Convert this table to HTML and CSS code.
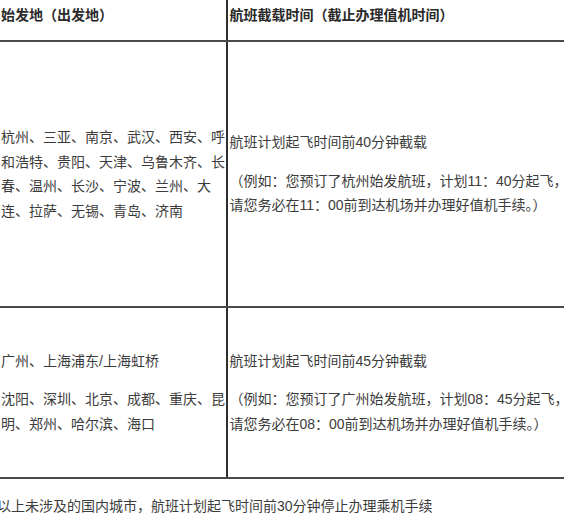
FILE: index.html
```html
<!DOCTYPE html>
<html lang="zh-CN">
<head>
<meta charset="utf-8">
<title>航班截载时间</title>
<link rel="stylesheet" href="styles.css">
</head>
<body>
<div class="page">
  <table class="cutoff">
    <tr class="head">
      <th class="col-city">始发地（出发地）</th>
      <th class="col-time">航班截载时间（截止办理值机时间）</th>
    </tr>
    <tr class="row1">
      <td class="col-city">杭州、三亚、南京、武汉、西安、呼和浩特、贵阳、天津、乌鲁木齐、长春、温州、长沙、宁波、兰州、大连、拉萨、无锡、青岛、济南</td>
      <td class="col-time">
        <p class="lead">航班计划起飞时间前40分钟截载</p>
        <p>（例如：您预订了杭州始发航班，计划11：40分起飞，请您务必在11：00前到达机场并办理好值机手续。）</p>
      </td>
    </tr>
    <tr class="row2">
      <td class="col-city">
        <p class="lead">广州、上海浦东/上海虹桥</p>
        <p>沈阳、深圳、北京、成都、重庆、昆明、郑州、哈尔滨、海口</p>
      </td>
      <td class="col-time">
        <p class="lead">航班计划起飞时间前45分钟截载</p>
        <p>（例如：您预订了广州始发航班，计划08：45分起飞，请您务必在08：00前到达机场并办理好值机手续。）</p>
      </td>
    </tr>
  </table>
  <p class="note">以上未涉及的国内城市，航班计划起飞时间前30分钟停止办理乘机手续</p>
</div>
</body>
</html>
```
FILE: styles.css
```css
html, body {
  margin: 0;
  padding: 0;
  background: #ffffff;
}
body {
  font-family: "Liberation Sans", "Noto Sans CJK SC", sans-serif;
  font-size: 14px;
  line-height: 24.5px;
  color: #3c3c3c;
}
.page {
  width: 564px;
  overflow: hidden;
}
.cutoff {
  border-collapse: collapse;
  table-layout: fixed;
  width: 572px;
}
.cutoff th,
.cutoff td {
  padding: 0 0 0 1px;
  text-align: left;
  vertical-align: middle;
  border-bottom: 2px solid #4a4a4a;
}
.cutoff .col-city {
  width: 225px;
  border-right: 2px solid #2e2e2e;
}
.cutoff .col-time {
  width: 342px;
}
.head th {
  font-weight: bold;
  color: #2a2a2a;
  height: 30px;
  padding-top: 0;
  padding-bottom: 10px;
  vertical-align: middle;
}
.row1 td {
  height: 264px;
}
.row2 td {
  height: 169px;
}
.cutoff p {
  margin: 0;
}
.cutoff p.lead {
  margin-bottom: 14px;
}
.note {
  margin: 15px 0 0 -3px;
  white-space: nowrap;
}
```
